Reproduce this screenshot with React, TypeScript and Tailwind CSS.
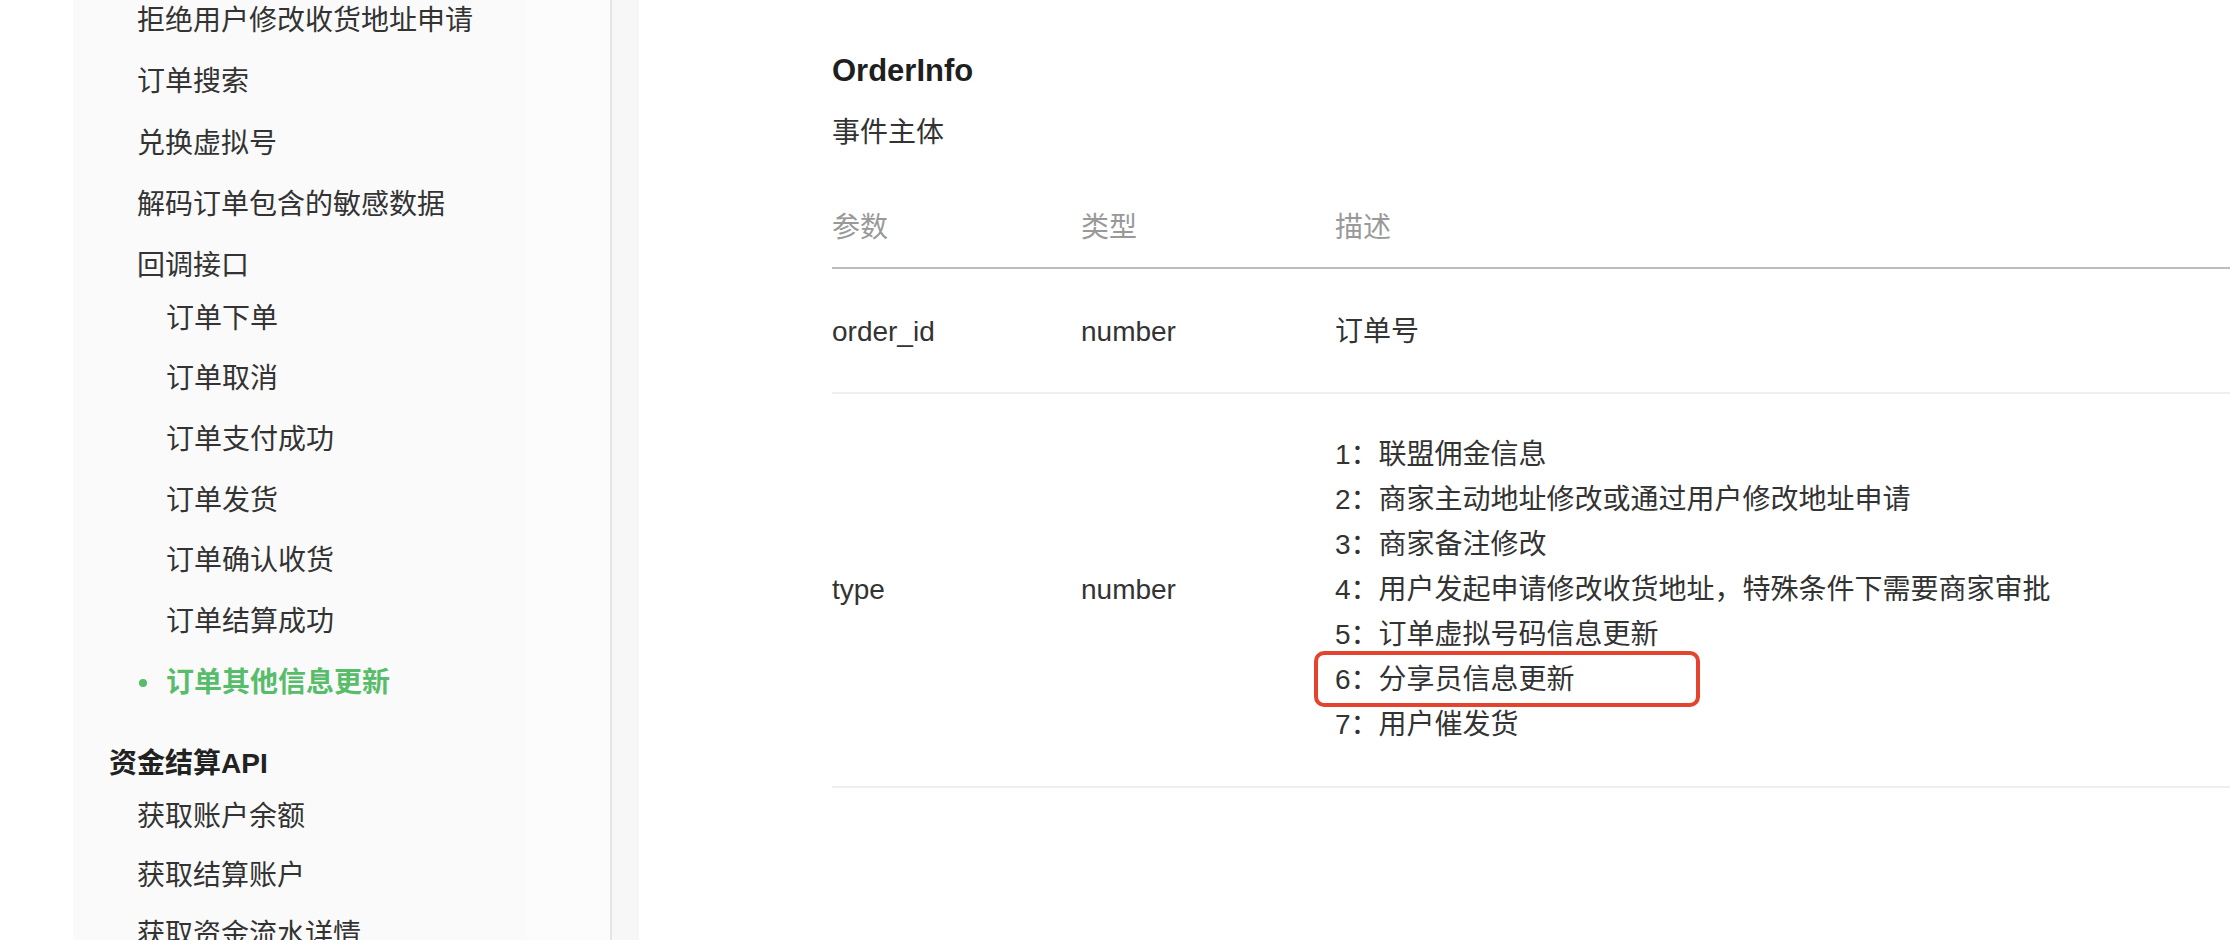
import React from "react";

type NavItem = { text: string; level: 2 | 3 | 1; mt: number; active?: boolean };

const items: NavItem[] = [
  { text: "拒绝用户修改收货地址申请", level: 2, mt: 0 },
  { text: "订单搜索", level: 2, mt: 21 },
  { text: "兑换虚拟号", level: 2, mt: 22 },
  { text: "解码订单包含的敏感数据", level: 2, mt: 21 },
  { text: "回调接口", level: 2, mt: 21 },
  { text: "订单下单", level: 3, mt: 13 },
  { text: "订单取消", level: 3, mt: 20 },
  { text: "订单支付成功", level: 3, mt: 21 },
  { text: "订单发货", level: 3, mt: 21 },
  { text: "订单确认收货", level: 3, mt: 20 },
  { text: "订单结算成功", level: 3, mt: 21 },
  { text: "订单其他信息更新", level: 3, mt: 21, active: true },
  { text: "资金结算API", level: 1, mt: 41 },
  { text: "获取账户余额", level: 2, mt: 13 },
  { text: "获取结算账户", level: 2, mt: 19 },
  { text: "获取资金流水详情", level: 2, mt: 19 },
];

const descLines = [
  "1：联盟佣金信息",
  "2：商家主动地址修改或通过用户修改地址申请",
  "3：商家备注修改",
  "4：用户发起申请修改收货地址，特殊条件下需要商家审批",
  "5：订单虚拟号码信息更新",
  "6：分享员信息更新",
  "7：用户催发货",
];

export default function App() {
  return (
    <div
      className="flex h-[940px] w-[2230px] overflow-hidden bg-white text-[#333]"
      style={{ fontFamily: '"Liberation Sans", "Noto Sans CJK SC", sans-serif' }}
    >
      <div className="w-[73px] shrink-0 bg-white" />
      <aside className="flex shrink-0">
        <nav className="flex w-[454px] flex-col bg-[#fafafa] pt-[1px]">
          {items.map((it, i) => {
            if (it.level === 1) {
              return (
                <div
                  key={i}
                  className="pl-[36px] text-[28px] font-semibold leading-[40px] whitespace-nowrap text-[#222]"
                  style={{ marginTop: it.mt }}
                >
                  {it.text}
                </div>
              );
            }
            if (it.active) {
              return (
                <div
                  key={i}
                  className="flex items-center pl-[66px] text-[28px] font-semibold leading-[40px] whitespace-nowrap text-[#57bd6a]"
                  style={{ marginTop: it.mt }}
                >
                  <span className="mr-[19px] h-[8px] w-[8px] rounded-full bg-[#57bd6a]" />
                  {it.text}
                </div>
              );
            }
            return (
              <div
                key={i}
                className={
                  it.level === 2
                    ? "pl-[64px] text-[28px] leading-[40px] whitespace-nowrap"
                    : "pl-[93px] text-[28px] leading-[40px] whitespace-nowrap"
                }
                style={{ marginTop: it.mt }}
              >
                {it.text}
              </div>
            );
          })}
        </nav>
        <div className="w-[83px] bg-[#fcfcfc]" />
        <div className="w-[2px] bg-[#e4e4e4]" />
        <div className="w-[27px] bg-[#f7f7f7]" />
      </aside>

      <main className="min-w-0 flex-1 pl-[193px] pt-[49px]">
        <h3 className="text-[31px] font-bold leading-[44px] text-[#1f1f1f]">OrderInfo</h3>
        <p className="mt-[17px] text-[28px] leading-[45px]">事件主体</p>

        <div className="mt-[50px]">
          <div className="grid grid-cols-[249px_254px_1fr] border-b-2 border-[#bdbdbd] pb-[17px] text-[28px] leading-[45px] text-[#999]">
            <div>参数</div>
            <div>类型</div>
            <div>描述</div>
          </div>

          <div className="grid grid-cols-[249px_254px_1fr] border-b-2 border-[#efefef] pt-[40px] pb-[38px] text-[28px] leading-[45px]">
            <div>order_id</div>
            <div>number</div>
            <div>订单号</div>
          </div>

          <div className="grid grid-cols-[249px_254px_1fr] items-center border-b-2 border-[#efefef] pt-[38px] pb-[39px] text-[28px] leading-[45px]">
            <div>type</div>
            <div>number</div>
            <div className="flex flex-col">
              {descLines.map((l, i) => (
                <div key={i} className="relative whitespace-nowrap">
                  {l}
                  {i === 5 && (
                    <span className="pointer-events-none absolute -left-[21px] -top-[6px] h-[56px] w-[386px] rounded-[10px] border-[4px] border-[#e4432d]" />
                  )}
                </div>
              ))}
            </div>
          </div>
        </div>
      </main>
    </div>
  );
}
